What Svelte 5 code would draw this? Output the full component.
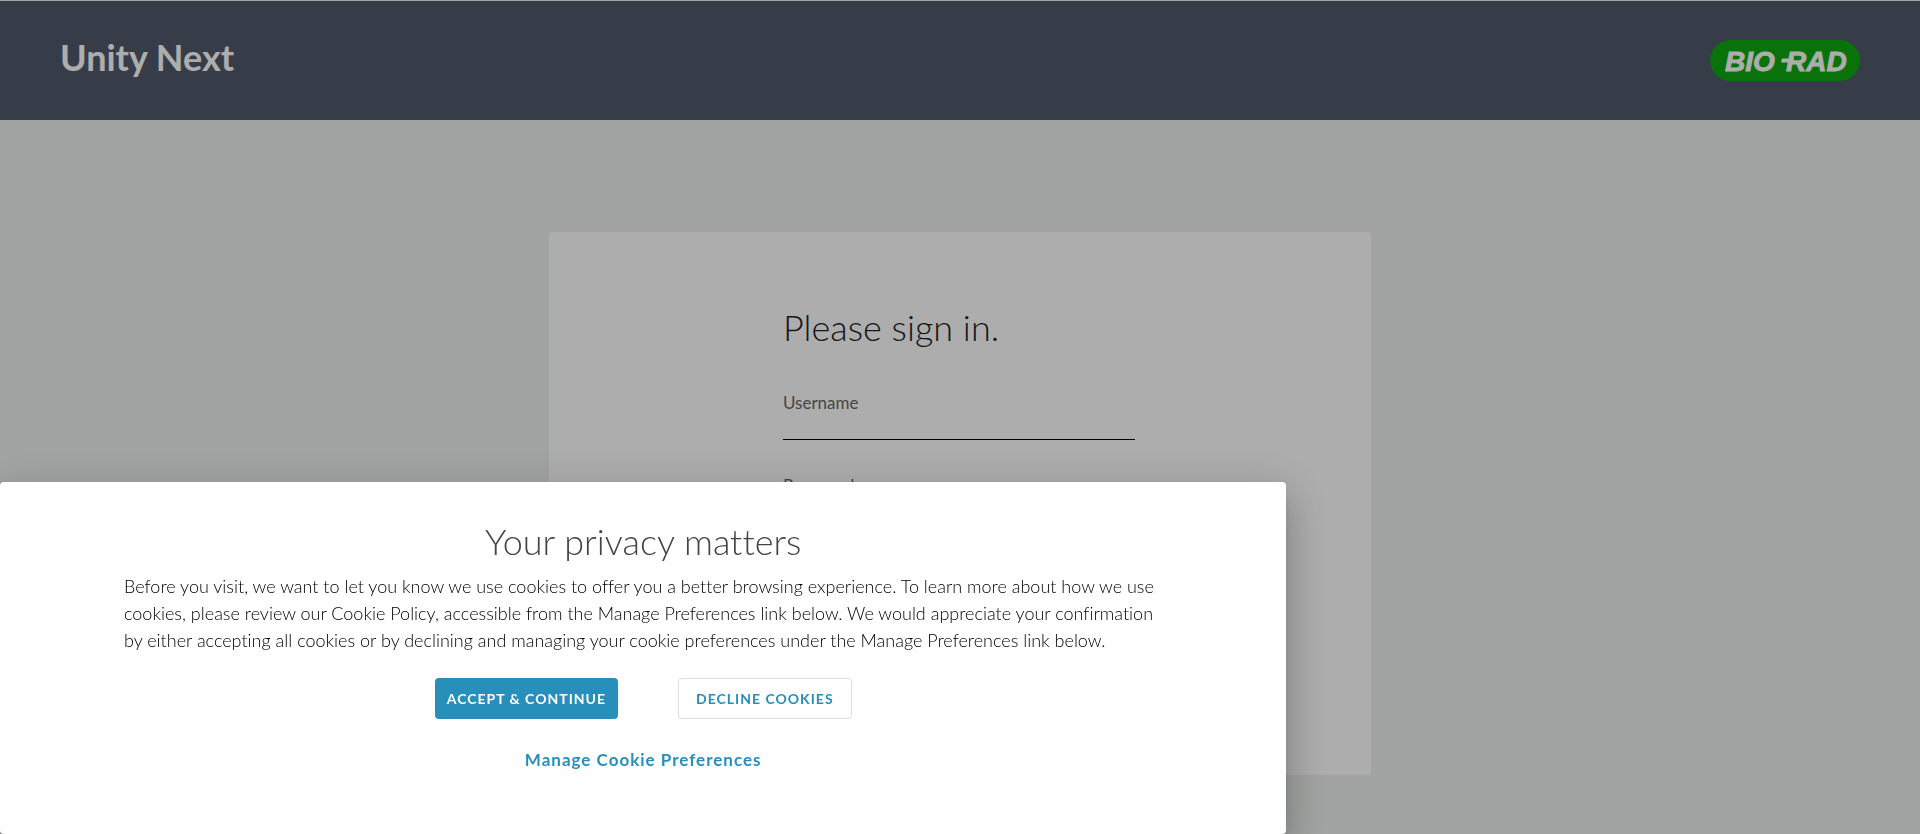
<script>
  let username = $state('');
  let password = $state('');
</script>

<div class="page">
  <header>
    <h1>Unity Next</h1>
    <svg class="logo" width="150" height="42" viewBox="0 0 150 42" role="img" aria-label="Bio-Rad">
      <rect x="0" y="0" width="150" height="41" rx="20.5" fill="#0fa80f" />
      <g fill="#fff" stroke="#fff" stroke-width="0.8" font-family="'Liberation Sans', Arial, sans-serif" font-size="28" font-weight="700" font-style="italic">
        <text x="15" y="30.5">BIO</text>
        <text x="76" y="30.5">RAD</text>
      </g>
      <path d="M72 18.500h12l-1 4h-12z" fill="#fff" />
    </svg>
  </header>

  <main>
    <form class="card" onsubmit={(e) => e.preventDefault()}>
      <div class="fields">
        <h2>Please sign in.</h2>
        <div class="field">
          <label for="username">Username</label>
          <input id="username" type="text" bind:value={username} />
        </div>
        <div class="field">
          <label for="password">Password</label>
          <input id="password" type="password" bind:value={password} />
        </div>
      </div>
    </form>
  </main>
</div>

<div class="backdrop">
  <div class="banner" role="dialog" aria-labelledby="privacy-title">
    <h2 id="privacy-title">Your privacy matters</h2>
    <p>
      Before you visit, we want to let you know we use cookies to offer you a better browsing experience. To learn more
      about how we use cookies, please review our Cookie Policy, accessible from the Manage Preferences link below. We
      would appreciate your confirmation by either accepting all cookies or by declining and managing your cookie
      preferences under the Manage Preferences link below.
    </p>
    <div class="actions">
      <button class="accept" type="button">ACCEPT &amp; CONTINUE</button>
      <button class="decline" type="button">DECLINE COOKIES</button>
    </div>
    <a href="#preferences">Manage Cookie Preferences</a>
  </div>
</div>

<style>
  :global(body) {
    margin: 0;
    background: #eff2f0;
  }

  .page,
  .backdrop {
    box-sizing: border-box;
    font-family: Lato, sans-serif;
  }

  .page {
    height: 100vh;
    overflow: hidden;
    padding-top: 1px;
    background: #eff2f0;
  }

  header {
    box-sizing: border-box;
    height: 119px;
    padding: 0 60px;
    display: flex;
    justify-content: space-between;
    background: #525a6b;
  }

  h1 {
    margin: 34px 0 0;
    font-size: 36px;
    line-height: 44px;
    font-weight: 700;
    color: #fff;
  }

  .logo {
    margin-top: 39px;
  }

  main {
    display: flex;
    justify-content: center;
    padding-top: 112px;
  }

  .card {
    box-sizing: border-box;
    width: 822px;
    min-height: 543px;
    padding-top: 73px;
    border-radius: 3px;
    background: #fff;
  }

  .fields {
    width: 352px;
    margin-left: 234px;
  }

  h2 {
    margin: 0;
    font-size: 36px;
    line-height: 44px;
    font-weight: 300;
  }

  .fields h2 {
    margin-bottom: 42px;
    color: #222;
  }

  .field {
    display: flex;
    flex-direction: column;
    margin-bottom: 34px;
  }

  label {
    font-size: 17px;
    line-height: 24px;
    color: #666;
  }

  input {
    box-sizing: border-box;
    height: 25px;
    padding: 0;
    border: 0;
    border-bottom: 1px solid #000;
    outline: 0;
    background: transparent;
    font: 17px Lato, sans-serif;
  }

  .backdrop {
    position: fixed;
    inset: 0;
    display: flex;
    align-items: flex-end;
    overflow: hidden;
    background: rgba(0, 0, 0, 0.32);
  }

  .banner {
    box-sizing: border-box;
    width: 67vw;
    min-height: 352px;
    padding: 37px 124px 59px;
    display: flex;
    flex-direction: column;
    align-items: center;
    border-radius: 4px;
    background: #fff;
    color: #000;
    font-variant-ligatures: none;
    box-shadow:
      0 11px 15px -7px rgba(0, 0, 0, 0.2),
      0 24px 38px 3px rgba(0, 0, 0, 0.14),
      0 9px 46px 8px rgba(0, 0, 0, 0.12);
  }

  .banner h2 {
    color: #444;
  }

  p {
    margin: 10px 0 24px;
    font-size: 18px;
    line-height: 27px;
    font-weight: 300;
  }

  .actions {
    display: flex;
    gap: 60px;
    margin-bottom: 29px;
  }

  button {
    height: 41px;
    border-radius: 4px;
    font: 700 14px Lato, sans-serif;
    letter-spacing: 1px;
  }

  .accept {
    padding: 0 12px;
    border: 0;
    background: #288fbb;
    color: #fff;
  }

  .decline {
    padding: 0 17px;
    border: 1px solid #ddd;
    background: #fff;
    color: #288fbb;
  }

  a {
    font-size: 17px;
    line-height: 24px;
    font-weight: 700;
    letter-spacing: 1px;
    color: #288fbb;
    text-decoration: none;
  }
</style>
